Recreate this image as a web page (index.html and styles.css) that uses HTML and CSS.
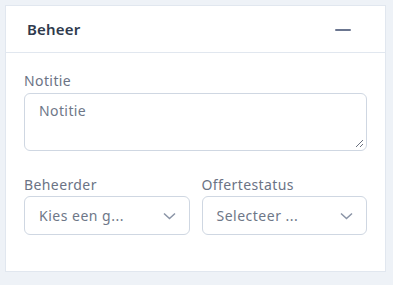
FILE: index.html
```html
<!DOCTYPE html>
<html lang="nl">
<head>
<meta charset="utf-8">
<link rel="stylesheet" href="styles.css">
</head>
<body>
<div class="card">
  <div class="card-header">
    <span class="title">Beheer</span>
    <span class="collapse"></span>
  </div>
  <div class="card-body">
    <label class="label">Notitie</label>
    <div class="textarea">Notitie
      <svg class="grip" width="9" height="9" viewBox="0 0 9 9"><path d="M1 8L8 1M5 8L8 5" stroke="#6b7280" stroke-width="1" fill="none"/></svg>
    </div>
    <div class="row">
      <div class="field">
        <label class="label">Beheerder</label>
        <div class="select"><span>Kies een g...</span>
          <svg width="13" height="8" viewBox="0 0 13 8"><path d="M1 1.5L6.5 6.5L12 1.5" stroke="#8a94a6" stroke-width="1.5" fill="none"/></svg>
        </div>
      </div>
      <div class="field">
        <label class="label">Offertestatus</label>
        <div class="select"><span>Selecteer ...</span>
          <svg width="13" height="8" viewBox="0 0 13 8"><path d="M1 1.5L6.5 6.5L12 1.5" stroke="#8a94a6" stroke-width="1.5" fill="none"/></svg>
        </div>
      </div>
    </div>
  </div>
</div>
</body>
</html>
```
FILE: styles.css
```css
html, body {
  margin: 0;
  padding: 0;
  background: #eef2f7;
  font-family: "Noto Sans", "Open Sans", sans-serif;
}
body {
  padding: 5px 7px 12px 5px;
}
.card {
  background: #fff;
  border: 1px solid #e1e7ef;
  width: 379px;
}
.card-header {
  height: 46px;
  border-bottom: 1px solid #e1e7ef;
  display: flex;
  align-items: center;
  justify-content: space-between;
  padding: 0 34px 0 21px;
}
.title {
  font-size: 15px;
  font-weight: 600;
  color: #2f3a4d;
  letter-spacing: 0.2px;
}
.collapse {
  width: 16px;
  height: 2px;
  margin-top: 2px;
  background: #6b7690;
  border-radius: 1px;
}
.card-body {
  padding: 19px 18px 36px 18px;
}
.label {
  display: block;
  font-size: 14px;
  letter-spacing: 0.4px;
  line-height: 17px;
  color: #6b7385;
}
.textarea {
  position: relative;
  margin-top: 4px;
  border: 1px solid #cfd7e2;
  border-radius: 6px;
  padding: 8px 14px 0 14px;
  height: 48px;
  font-size: 14px;
  letter-spacing: 0.4px;
  line-height: 17px;
  color: #6e7788;
}
.grip {
  position: absolute;
  right: 2px;
  bottom: 2px;
}
.row {
  display: grid;
  grid-template-columns: 1fr 1fr;
  gap: 12px;
  margin-top: 25px;
}
.select {
  margin-top: 3px;
  height: 37px;
  border: 1px solid #cfd7e2;
  border-radius: 6px;
  display: flex;
  align-items: center;
  justify-content: space-between;
  padding: 0 13px 0 14px;
  font-size: 14px;
  letter-spacing: 0.5px;
  color: #6e7788;
}
```
